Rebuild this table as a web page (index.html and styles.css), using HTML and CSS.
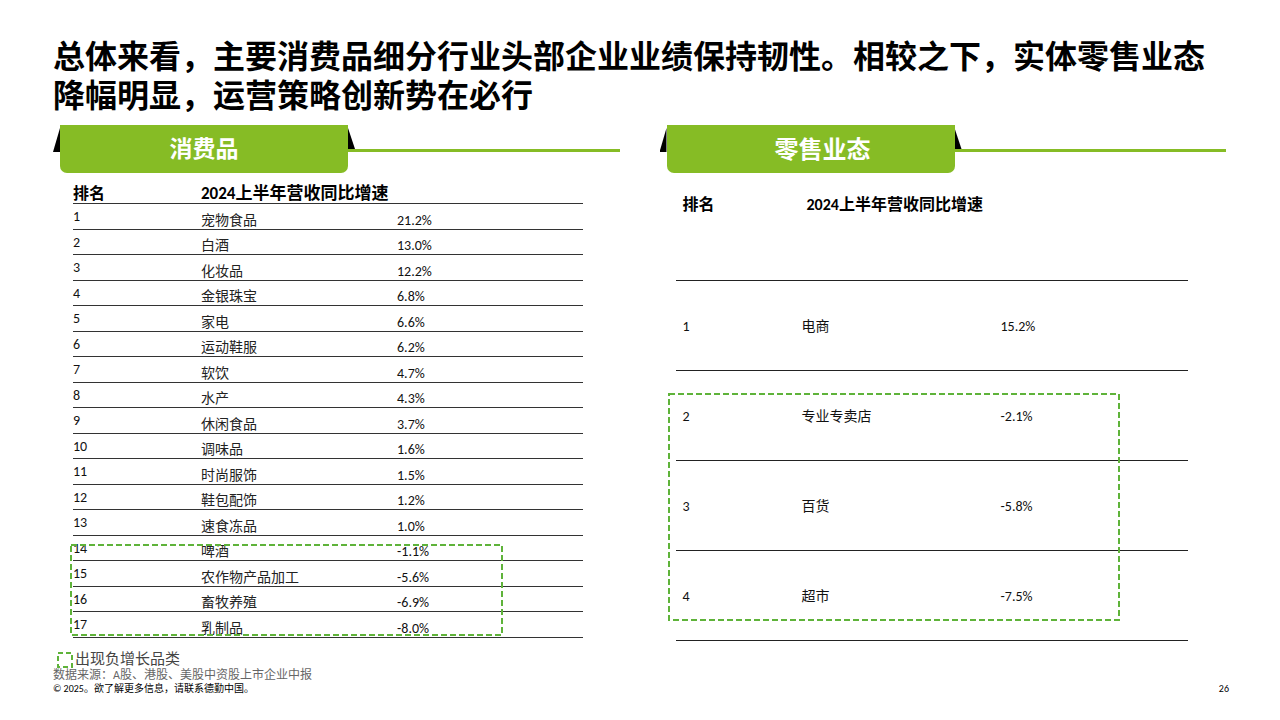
FILE: index.html
```html
<!DOCTYPE html>
<html lang="zh-CN">
<head>
<meta charset="utf-8">
<title>消费品与零售业态</title>
<link rel="stylesheet" href="styles.css">
</head>
<body>
<div class="page">
  <h1 class="title"><span class="tline">总体来看，主要消费品细分行业头部企业业绩保持韧性。相较之下，实体零售业态</span><span class="tline">降幅明显，运营策略创新势在必行</span></h1>
  <div class="main">
    <section class="panel">
      <div class="banner">
        <div class="tri tri-l"></div>
        <div class="tab">消费品</div>
        <div class="tail"><div class="tri tri-r"></div><div class="rule"></div></div>
      </div>
      <div class="ltable">
        <div class="lrow lhead"><span class="c1">排名</span><span class="c2">2024上半年营收同比增速</span><span class="c3"></span></div>
        <div class="lrow"><span class="c1">1</span><span class="c2">宠物食品</span><span class="c3">21.2%</span></div>
        <div class="lrow"><span class="c1">2</span><span class="c2">白酒</span><span class="c3">13.0%</span></div>
        <div class="lrow"><span class="c1">3</span><span class="c2">化妆品</span><span class="c3">12.2%</span></div>
        <div class="lrow"><span class="c1">4</span><span class="c2">金银珠宝</span><span class="c3">6.8%</span></div>
        <div class="lrow"><span class="c1">5</span><span class="c2">家电</span><span class="c3">6.6%</span></div>
        <div class="lrow"><span class="c1">6</span><span class="c2">运动鞋服</span><span class="c3">6.2%</span></div>
        <div class="lrow"><span class="c1">7</span><span class="c2">软饮</span><span class="c3">4.7%</span></div>
        <div class="lrow"><span class="c1">8</span><span class="c2">水产</span><span class="c3">4.3%</span></div>
        <div class="lrow"><span class="c1">9</span><span class="c2">休闲食品</span><span class="c3">3.7%</span></div>
        <div class="lrow"><span class="c1">10</span><span class="c2">调味品</span><span class="c3">1.6%</span></div>
        <div class="lrow"><span class="c1">11</span><span class="c2">时尚服饰</span><span class="c3">1.5%</span></div>
        <div class="lrow"><span class="c1">12</span><span class="c2">鞋包配饰</span><span class="c3">1.2%</span></div>
        <div class="lrow"><span class="c1">13</span><span class="c2">速食冻品</span><span class="c3">1.0%</span></div>
        <div class="lrow"><span class="c1">14</span><span class="c2">啤酒</span><span class="c3">-1.1%</span></div>
        <div class="lrow"><span class="c1">15</span><span class="c2">农作物产品加工</span><span class="c3">-5.6%</span></div>
        <div class="lrow"><span class="c1">16</span><span class="c2">畜牧养殖</span><span class="c3">-6.9%</span></div>
        <div class="lrow"><span class="c1">17</span><span class="c2">乳制品</span><span class="c3">-8.0%</span></div>
        <svg class="dash-box dash-left" width="433" height="92" viewBox="0 0 433 92"><rect x="1" y="1" width="431" height="90" fill="none" stroke="#5fb33a" stroke-width="2" stroke-dasharray="6 3"/></svg>
      </div>
    </section>
    <section class="panel">
      <div class="banner">
        <div class="tri tri-l"></div>
        <div class="tab tab-shift">零售业态</div>
        <div class="tail"><div class="tri tri-r"></div><div class="rule"></div></div>
      </div>
      <div class="rtable">
        <div class="rrow rhead"><span class="c1">排名</span><span class="c2">2024上半年营收同比增速</span><span class="c3"></span></div>
        <div class="rrow"><span class="c1">1</span><span class="c2">电商</span><span class="c3">15.2%</span></div>
        <div class="rrow"><span class="c1">2</span><span class="c2">专业专卖店</span><span class="c3">-2.1%</span></div>
        <div class="rrow"><span class="c1">3</span><span class="c2">百货</span><span class="c3">-5.8%</span></div>
        <div class="rrow"><span class="c1">4</span><span class="c2">超市</span><span class="c3">-7.5%</span></div>
        <svg class="dash-box dash-right" width="452" height="228" viewBox="0 0 452 228"><rect x="1" y="1" width="450" height="226" fill="none" stroke="#5fb33a" stroke-width="2" stroke-dasharray="6 3"/></svg>
      </div>
    </section>
  </div>
  <footer class="footer">
    <div class="notes">
      <div class="legend"><svg class="legend-box" width="16" height="16" viewBox="0 0 16 16"><rect x="1" y="1" width="14" height="14" fill="none" stroke="#5fb33a" stroke-width="2" stroke-dasharray="5 3"/></svg><span>出现负增长品类</span></div>
      <div class="source">数据来源：A股、港股、美股中资股上市企业中报</div>
      <div class="copy">© 2025。欲了解更多信息，请联系德勤中国。</div>
    </div>
    <div class="pagenum">26</div>
  </footer>
</div>
</body>
</html>
```

FILE: styles.css
```css
* { box-sizing: border-box; }
html, body { margin: 0; padding: 0; background: #fff; }
body {
  font-family: Carlito, Lato, "Noto Sans CJK SC", sans-serif;
  color: #111;
}
.page {
  width: 1280px;
  height: 720px;
  padding: 35px 54px 0 53px;
  display: flex;
  flex-direction: column;
  overflow: hidden;
}
.title {
  margin: 0;
  font-family: "Noto Sans CJK SC", sans-serif;
  font-weight: 700;
  font-size: 32px;
  line-height: 39px;
  white-space: nowrap;
  color: #000;
  display: flex;
  flex-direction: column;
}
.tline { display: block; height: 39px; }
.main {
  margin-top: 12px;
  display: flex;
  gap: 40px;
  align-items: flex-start;
}
.panel { flex: 1; display: flex; flex-direction: column; }
.banner { display: flex; align-items: flex-start; height: 48px; }
.tri { width: 7px; background: #000; }
.tri-l { height: 24px; margin-top: 3px; clip-path: polygon(100% 0, 100% 100%, 0 100%); }
.tri-r { height: 21px; margin-top: 3px; clip-path: polygon(0 0, 100% 100%, 0 100%); }
.tab {
  width: 288px;
  height: 48px;
  background: #86bc25;
  border-radius: 0 0 7px 7px;
  color: #fff;
  font-family: "Noto Sans CJK SC", sans-serif;
  font-weight: 700;
  font-size: 23px;
  display: flex;
  align-items: center;
  justify-content: center;
  padding-bottom: 4px;
}
.tab-shift { padding-left: 24px; font-size: 24px; }
.tail { flex: 1; display: flex; flex-direction: column; }
.rule { height: 3px; background: #86bc25; }

/* left table */
.ltable {
  position: relative;
  margin: 11px 0 0 20px;
  width: 510px;
  font-size: 14px;
}
.lrow {
  display: grid;
  grid-template-columns: 128px 196px 1fr;
  height: 25.5px;
  border-bottom: 1px solid #333;
  line-height: 16px;
  white-space: nowrap;
}
.lrow .c1 { align-self: start; padding-top: 5px; }
.lrow .c2, .lrow .c3 { align-self: end; }
.lrow .c2 { color: #222; }
.lhead { height: 20px; font-weight: 700; font-size: 17px; color: #000; line-height: 18px; }
.lhead .c1 { align-self: end; padding-top: 0; font-size: 16px; }
.lhead .c2 { color: #000; }
.dash-box { position: absolute; pointer-events: none; }
.dash-left { left: -3px; top: 360px; }

/* right table */
.rtable {
  position: relative;
  margin-left: 16px;
  width: 512px;
  font-size: 14px;
}
.rrow {
  display: grid;
  grid-template-columns: 126px 199px 1fr;
  height: 90px;
  border-bottom: 1px solid #222;
  align-items: center;
  line-height: 18px;
  padding-top: 2px;
  white-space: nowrap;
}
.rrow .c1 { padding-left: 7px; }
.rhead {
  height: 108px;
  align-items: start;
  padding-top: 23px;
  font-weight: 700;
  font-size: 16px;
  color: #000;
}
.rhead .c2 { padding-left: 5px; }
.dash-right { left: -8px; top: 220px; }

/* footer */
.footer {
  margin-top: 10px;
  display: flex;
  justify-content: space-between;
  align-items: flex-end;
}
.notes { display: flex; flex-direction: column; }
.legend {
  display: flex;
  align-items: center;
  padding-left: 4px;
  font-size: 15px;
  line-height: 17px;
  color: #444;
}
.legend-box { margin-right: 2px; }
.source { font-size: 12px; line-height: 14px; color: #666; }
.copy { font-size: 10px; line-height: 13px; color: #000; }
.pagenum { font-size: 10px; line-height: 13px; color: #000; margin-right: -3px; }
```
